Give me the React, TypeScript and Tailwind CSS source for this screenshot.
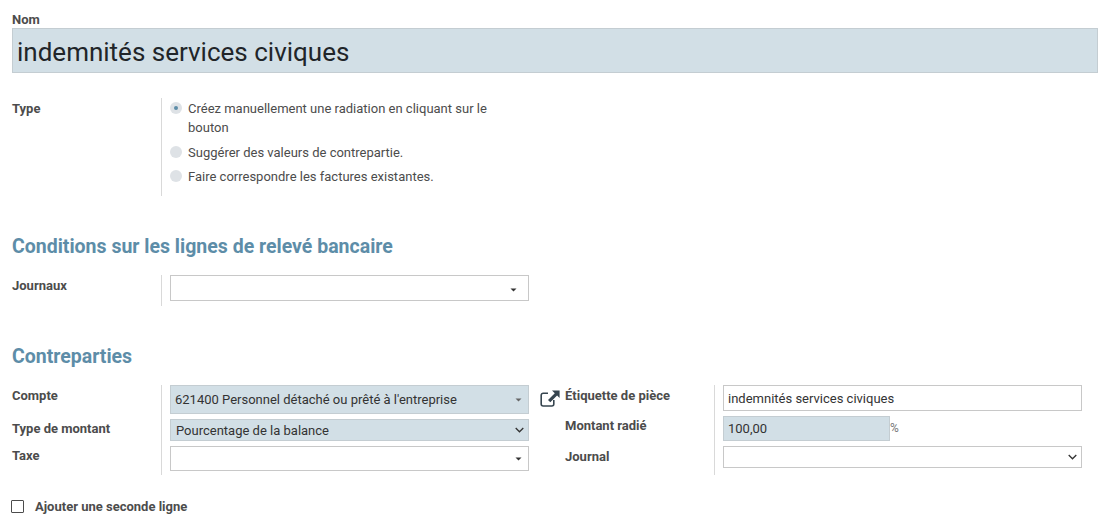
const Caret = ({ light }: { light?: boolean }) => (
  <svg width="7" height="4" viewBox="0 0 7 4" className={light ? 'text-[#666]' : 'text-[#333]'}>
    <path d="M0.5 0.5h6L3.5 3.5z" fill="currentColor" />
  </svg>
)

const Chevron = () => (
  <svg width="9" height="6" viewBox="0 0 9 6" fill="none" stroke="#333" strokeWidth="1.3">
    <path d="M0.7 1l3.8 3.8L8.3 1" />
  </svg>
)

const ExternalLink = () => (
  <svg width="20" height="17" viewBox="0 0 20 17" fill="none" className="text-[#36454f]">
    <path d="M8 3.2H3.2a2 2 0 0 0-2 2v8.8a2 2 0 0 0 2 2h8.6a2 2 0 0 0 2-2v-4" stroke="currentColor" strokeWidth="1.6" />
    <path d="M12 0.4H19.6V8L17.1 5.5 10.3 12.3 8 10 14.8 3.2z" fill="currentColor" />
  </svg>
)

function Radio({ checked, label }: { checked?: boolean; label: string }) {
  return (
    <div className="flex items-start">
      <span className="mt-[3px] flex h-[12px] w-[12px] shrink-0 items-center justify-center rounded-full bg-[#dee2e6]">
        {checked && <span className="h-[4px] w-[4px] rounded-full bg-[#5d8da8]" />}
      </span>
      <span className="ml-[6px] leading-[19px]">{label}</span>
    </div>
  )
}

export default function App() {
  return (
    <div className="h-[526px] overflow-hidden bg-white pl-3 pt-[10px] font-['Roboto',sans-serif] text-[13px] leading-[19.5px] text-[#4c4c4c]">
      <div className="h-[18px] font-bold">Nom</div>
      <div className="h-[45px] border border-[#c4cdd2] bg-[#d2dfe6] pl-[4px] text-[26px] leading-[46px] text-[#212529]">
        indemnités services civiques
      </div>

      <div className="mt-[25px] flex">
        <div className="w-[149px] shrink-0 pt-[1px] font-bold">Type</div>
        <div className="flex h-[98px] w-[360px] flex-col gap-[5.5px] border-l border-[#d9d9d9] pl-[8px] pt-[1px]">
          <Radio checked label="Créez manuellement une radiation en cliquant sur le bouton" />
          <Radio label="Suggérer des valeurs de contrepartie." />
          <Radio label="Faire correspondre les factures existantes." />
        </div>
      </div>

      <h2 className="mt-[38px] h-[24px] pt-[1px] text-[19.5px] font-bold leading-[24px] text-[#5d8da8]">
        Conditions sur les lignes de relevé bancaire
      </h2>

      <div className="mt-[17px] flex">
        <div className="w-[149px] shrink-0 pt-[1px] font-bold">Journaux</div>
        <div className="h-[31px] border-l border-[#d9d9d9] pl-[8px]">
          <div className="flex h-[26px] w-[359px] items-end justify-end border border-[#c8c8c8] pb-[8px] pr-[11px]">
            <Caret />
          </div>
        </div>
      </div>

      <h2 className="mt-[38px] h-[24px] pt-[1px] text-[19.5px] font-bold leading-[24px] text-[#5d8da8]">Contreparties</h2>

      <div className="mt-[17px] flex">
        <div className="w-[149px] shrink-0 pt-[1px] font-bold">
          <div className="h-[33px]">Compte</div>
          <div className="h-[27px]">Type de montant</div>
          <div>Taxe</div>
        </div>
        <div className="h-[90px] border-l border-[#d9d9d9] pl-[8px]">
          <div className="flex h-[29px] w-[359px] items-center justify-between border border-[#c4cdd2] bg-[#d2dfe6] pl-[4px] pr-[6px] text-[#333]">
            <span>621400 Personnel détaché ou prêté à l'entreprise</span>
            <Caret light />
          </div>
          <div className="mt-[5px] flex h-[22px] w-[359px] items-center justify-between border border-[#c4cdd2] bg-[#d2dfe6] pl-[4px] pr-[4px] text-[#333]">
            <span className="pl-[1px] pt-[1px]">Pourcentage de la balance</span>
            <Chevron />
          </div>
          <div className="mt-[5px] flex h-[25px] w-[359px] items-center justify-end border border-[#c8c8c8] pr-[6px]">
            <Caret />
          </div>
        </div>

        <div className="ml-[11px] w-[20px] shrink-0 pt-[5px]">
          <ExternalLink />
        </div>
        <div className="ml-[5px] w-[149px] shrink-0 pt-[1px] font-bold">
          <div className="h-[30px]">Étiquette de pièce</div>
          <div className="h-[31px]">Montant radié</div>
          <div>Journal</div>
        </div>
        <div className="h-[90px] border-l border-[#d9d9d9] pl-[8px] text-[#333]">
          <div className="flex h-[26px] w-[359px] items-center border border-[#c8c8c8] pl-[4px] pt-[1px]">
            indemnités services civiques
          </div>
          <div className="mt-[5px] flex items-center">
            <div className="flex h-[25px] w-[167px] items-center border border-[#c4cdd2] bg-[#d2dfe6] pl-[4px]">100,00</div>
            <span className="pt-[1px] text-[12px] text-[#777]">%</span>
          </div>
          <div className="mt-[5px] flex h-[22px] w-[359px] items-center justify-end border border-[#c8c8c8] pr-[4px]">
            <Chevron />
          </div>
        </div>
      </div>

      <div className="mt-[22px] flex items-center font-bold">
        <span className="-ml-[1px] mr-[1px] h-[13px] w-[13px] rounded-[1px] border border-[#4c4c4c]" />
        <span className="ml-[10px]">Ajouter une seconde ligne</span>
      </div>
    </div>
  )
}
